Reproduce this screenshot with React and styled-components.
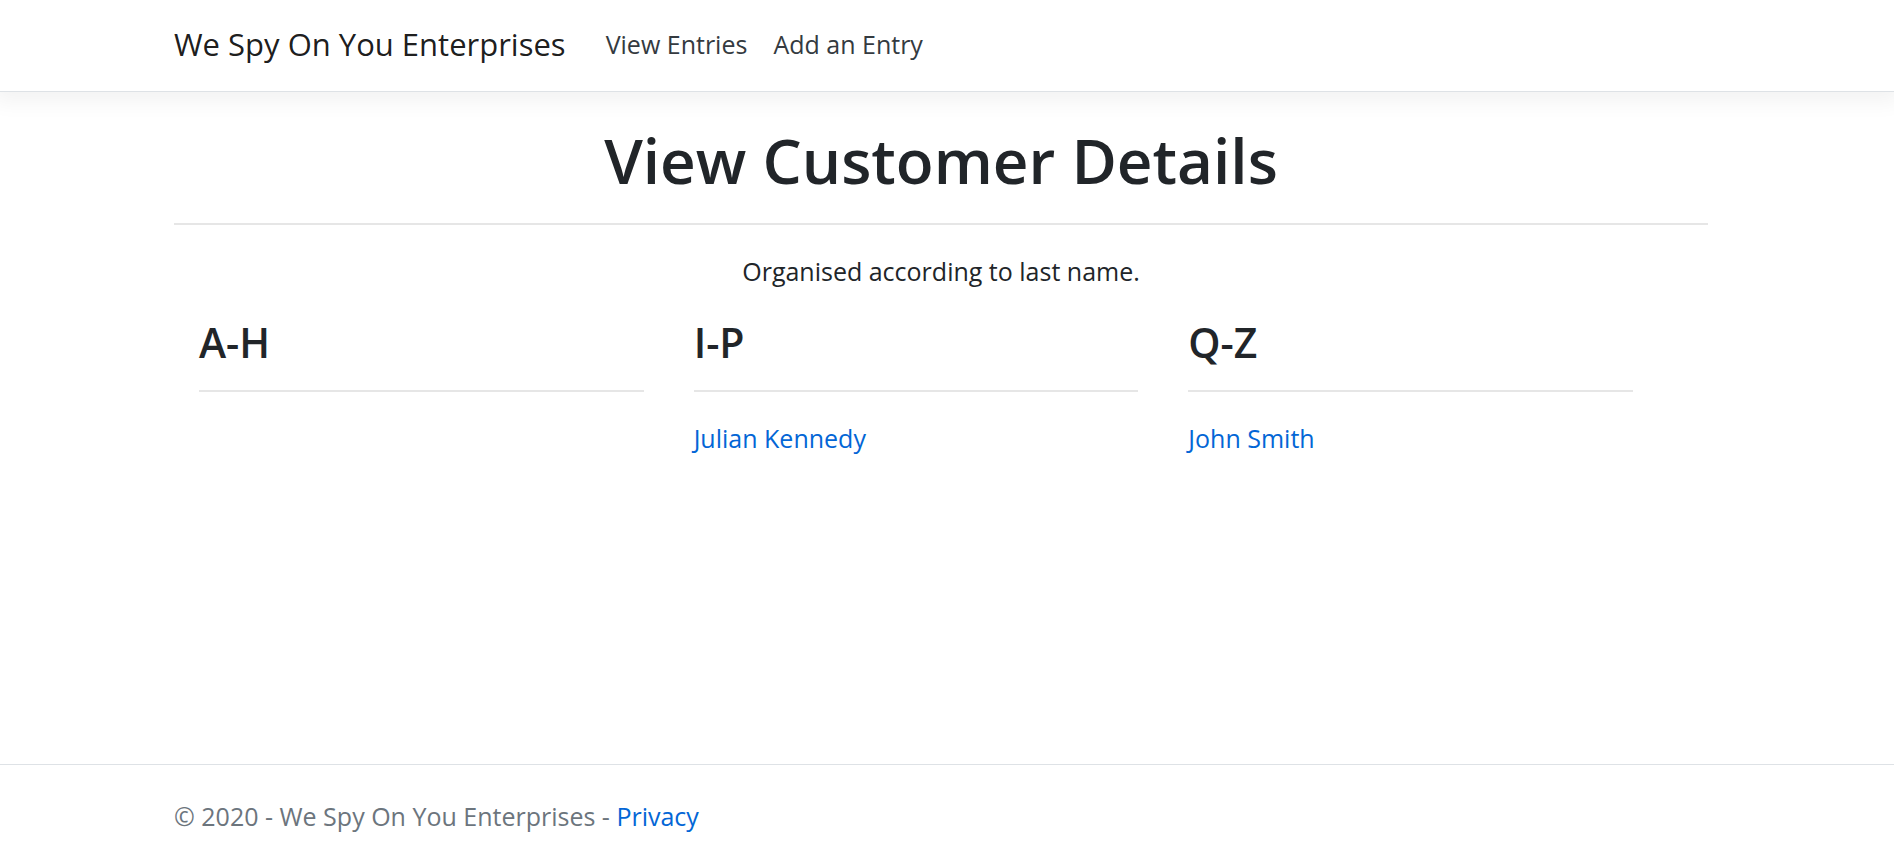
import React from "react";
import styled, { createGlobalStyle } from "styled-components";

const GlobalStyle = createGlobalStyle`
  *, *::before, *::after { box-sizing: border-box; }
  body {
    margin: 0;
    background: #fff;
    color: #212529;
    font-family: "Segoe UI", "Open Sans", "Noto Sans", sans-serif;
    font-size: 25px;
    line-height: 38px;
  }
`;

const Page = styled.div`
  min-height: 100vh;
  display: flex;
  flex-direction: column;
  overflow-x: clip;
`;

const Header = styled.header`
  padding: 0 36px 0 24px;
  background: #fff;
  border-bottom: 1px solid #dee2e6;
  box-shadow: 0 4px 20px 6px rgba(0, 0, 0, 0.05);
`;

const Container = styled.div`
  width: 100%;
  max-width: 1534px;
  margin: 0 auto;
`;

const Nav = styled(Container).attrs({ as: "nav" })`
  display: flex;
  align-items: center;
  gap: 40px;
  padding: 25px 0 28px;
`;

const Brand = styled.a`
  color: #000000e6;
  font-size: 31px;
  text-decoration: none;
`;

const NavLinks = styled.ul`
  display: flex;
  gap: 26px;
  margin: 0;
  padding: 0;
  list-style: none;
`;

const NavLink = styled.a`
  color: #343a40;
  text-decoration: none;
`;

const Main = styled.main`
  flex: 1;
  padding: 29px 36px 24px 24px;
`;

const Title = styled.h1`
  margin: 0 0 24px;
  font-size: 62px;
  font-weight: 600;
  line-height: 78px;
  text-align: center;
`;

const Rule = styled.hr`
  height: 2px;
  margin: 0;
  border: 0;
  background: #e6e6e6;
`;

const Intro = styled.p`
  margin: 27px 0 26px;
  text-align: center;
`;

const Groups = styled.div`
  display: grid;
  grid-template-columns: repeat(3, 1fr);
  gap: 50px;
  padding: 0 75px 0 25px;
`;

const GroupTitle = styled.h2`
  margin: 0 0 22px;
  font-size: 41px;
  font-weight: 600;
  line-height: 52px;
`;

const Names = styled.ul`
  margin: 27px 0 0;
  padding: 0;
  list-style: none;
`;

const Link = styled.a`
  color: #0366d6;
  text-decoration: none;
`;

const Footer = styled.footer`
  padding: 32px 36px 15px 24px;
  border-top: 1px solid #dee2e6;
  color: #6c757d;
`;

const groups = [
  { title: "A-H", names: [] },
  { title: "I-P", names: ["Julian Kennedy"] },
  { title: "Q-Z", names: ["John Smith"] },
];

export default function App() {
  return (
    <Page>
      <GlobalStyle />
      <Header>
        <Nav>
          <Brand href="#">We Spy On You Enterprises</Brand>
          <NavLinks>
            <li><NavLink href="#view">View Entries</NavLink></li>
            <li><NavLink href="#add">Add an Entry</NavLink></li>
          </NavLinks>
        </Nav>
      </Header>
      <Main>
        <Container>
          <Title>View Customer Details</Title>
          <Rule />
          <Intro>Organised according to last name.</Intro>
          <Groups>
            {groups.map(({ title, names }) => (
              <section key={title}>
                <GroupTitle>{title}</GroupTitle>
                <Rule />
                <Names>
                  {names.map((name) => (
                    <li key={name}><Link href="#customer">{name}</Link></li>
                  ))}
                </Names>
              </section>
            ))}
          </Groups>
        </Container>
      </Main>
      <Footer>
        <Container>
          © 2020 - We Spy On You Enterprises - <Link href="#privacy">Privacy</Link>
        </Container>
      </Footer>
    </Page>
  );
}
